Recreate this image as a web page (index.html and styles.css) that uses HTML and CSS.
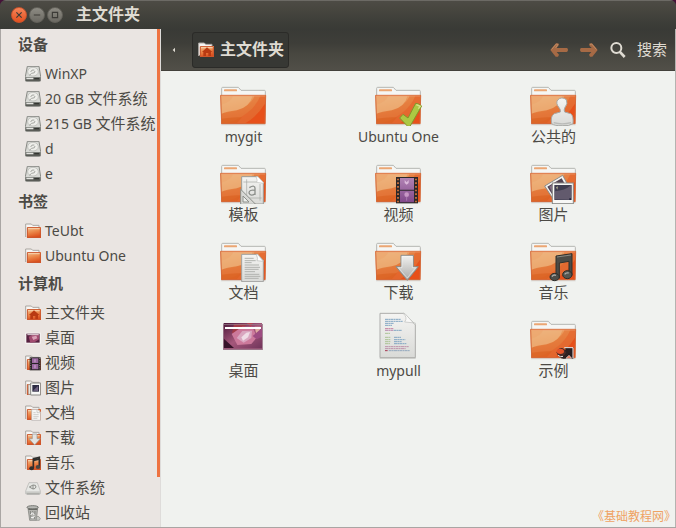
FILE: index.html
```html
<!DOCTYPE html>
<html lang="zh-CN">
<head>
<meta charset="utf-8">
<meta name="viewport" content="width=device-width, initial-scale=1">
<title>主文件夹</title>
<link rel="stylesheet" href="styles.css">
</head>
<body>
<svg class="defs" aria-hidden="true">
  <defs>
    <linearGradient id="g-front" x1="0" y1="0" x2="0.25" y2="1">
      <stop offset="0" stop-color="#eeb27c"/><stop offset="0.45" stop-color="#e88a48"/><stop offset="1" stop-color="#dc5820"/>
    </linearGradient>
    <linearGradient id="g-paper" x1="0" y1="0" x2="0" y2="1">
      <stop offset="0" stop-color="#f4f4f2"/><stop offset="1" stop-color="#d9dad7"/>
    </linearGradient>
    <linearGradient id="g-grey" x1="0" y1="0" x2="0" y2="1">
      <stop offset="0" stop-color="#f2f2f0"/><stop offset="1" stop-color="#a9a9a7"/>
    </linearGradient>
    <linearGradient id="g-film" x1="0" y1="0" x2="0" y2="1">
      <stop offset="0" stop-color="#b183b4"/><stop offset="1" stop-color="#81488a"/>
    </linearGradient>
    <linearGradient id="g-small" x1="0" y1="0" x2="0.3" y2="1">
      <stop offset="0" stop-color="#f0c294"/><stop offset="0.5" stop-color="#ec8a4c"/><stop offset="1" stop-color="#dc501c"/>
    </linearGradient>
    <linearGradient id="g-wall" x1="0" y1="0" x2="1" y2="1">
      <stop offset="0" stop-color="#4b1838"/><stop offset="0.5" stop-color="#a5577b"/><stop offset="1" stop-color="#6e3359"/>
    </linearGradient>
    <clipPath id="c-front"><rect x="3" y="52" width="132" height="84"/></clipPath>
    <clipPath id="c-wall"><rect x="11" y="33" width="115" height="76"/></clipPath>

    <symbol id="folder" viewBox="0 0 144 144">
      <path d="M3 139H137V142H3Z" fill="#000" opacity="0.12"/>
      <path d="M5 54V31Q5 28 8 28H55L63 37H133Q136 37 136 40V54Z" fill="#f5f6f4" stroke="#b5b6b2" stroke-width="3"/>
      <rect x="12" y="34" width="39" height="6" rx="2" fill="#eba673"/>
      <path d="M1 51H138L136 138H4Z" fill="url(#g-front)"/>
      <g clip-path="url(#c-front)">
        <path d="M3 138V108Q50 104 74 88Q100 70 104 52H136V138Z" fill="#e4783a" opacity="0.7"/>
        <path d="M3 52H98Q90 88 50 97Q20 101 3 108Z" fill="#eeb680" opacity="0.75"/>
        <path d="M3 52H40Q36 72 3 80Z" fill="#eca56c" opacity="0.6"/>
        <path d="M10 138Q50 130 80 106Q108 86 122 52H138V138Z" fill="#e4602a" opacity="0.6"/>
        <path d="M72 138Q110 118 136 76V138Z" fill="#e74e18" opacity="0.9"/>
        <path d="M4 122Q42 116 66 118L48 138H4Z" fill="#d9601f" opacity="0.6"/>
      </g>
      <path d="M2 52H137L135 137H5Z" fill="none" stroke="#d46a3c" stroke-width="3"/>
      <path d="M4 54H135" stroke="#f2a272" stroke-width="2"/>
    </symbol>

    <symbol id="small-folder" viewBox="0 0 48 48">
      <path d="M2 42V3H19L23 7H42V14" fill="#f7f5f3" stroke="#aaa5a0" stroke-width="3"/>
      <path d="M6 12H48V45H6Z" fill="url(#g-small)"/>
      <path d="M7 14H46V43H7Z" fill="none" stroke="#ca5730" stroke-width="3"/>
      <path d="M9 17H44" stroke="#f8d4ac" stroke-width="3"/>
    </symbol>

    <symbol id="drive" viewBox="0 0 48 48">
      <path d="M7 1H42L47 32V43Q47 46 44 46H4Q1 46 1 43V32Z" fill="#d8d9d5" stroke="#888a85" stroke-width="3"/>
      <path d="M2 34H46V45H2Z" fill="#5a5c57"/>
      <path d="M4 35H25V40H4Z" fill="#e5e5e1"/><path d="M28 36H42V40H28Z" fill="#343632"/>
      <ellipse cx="24" cy="17" rx="16" ry="13" fill="#eeeeea" stroke="#b2b4af" stroke-width="2"/>
      <path d="M17 18Q19 10 28 12M20 22Q31 22 30 15M13 28L20 22" fill="none" stroke="#a4a6a1" stroke-width="3"/>
    </symbol>
  </defs>
</svg>

<div class="window">
  <header class="titlebar">
    <div class="window-buttons">
      <button class="wbtn close" aria-label="关闭"><svg viewBox="0 0 48 48"><path d="M15 15L33 33M33 15L15 33"/></svg></button>
      <button class="wbtn" aria-label="最小化"><svg viewBox="0 0 48 48"><path d="M13 24H35"/></svg></button>
      <button class="wbtn" aria-label="最大化"><svg viewBox="0 0 48 48"><path d="M15 15H33V33H15Z"/></svg></button>
    </div>
    <h1>主文件夹</h1>
  </header>

  <div class="body">
    <nav class="sidebar" aria-label="位置">
      <h2>设备</h2>
      <ul>
        <li><a href="#"><svg><use href="#drive"/></svg><span class="latin">WinXP</span></a></li>
        <li><a href="#"><svg><use href="#drive"/></svg><span><span class="latin">20 GB </span>文件系统</span></a></li>
        <li><a href="#"><svg><use href="#drive"/></svg><span><span class="latin">215 GB </span>文件系统</span></a></li>
        <li><a href="#"><svg><use href="#drive"/></svg><span class="latin">d</span></a></li>
        <li><a href="#"><svg><use href="#drive"/></svg><span class="latin">e</span></a></li>
      </ul>
      <h2>书签</h2>
      <ul>
        <li><a href="#"><svg><use href="#small-folder"/></svg><span class="latin">TeUbt</span></a></li>
        <li><a href="#"><svg><use href="#small-folder"/></svg><span class="latin">Ubuntu One</span></a></li>
      </ul>
      <h2>计算机</h2>
      <ul>
        <li><a href="#"><svg viewBox="0 0 48 48"><use href="#small-folder"/><path d="M27 16L43 30H39V42H31V33H24V42H16V30H12Z" fill="#b93a12"/></svg>主文件夹</a></li>
        <li><a href="#"><svg viewBox="0 0 48 48"><path d="M1 8H47V41H1Z" fill="#faf8f7"/><path d="M4 11H44V38H4Z" fill="#56203f"/><path d="M16 38L11 20L26 13H42V28L30 36Z" fill="#a14b70"/><path d="M20 20L34 17L37 25L25 30Z" fill="#d9a0b6"/><path d="M7 14H41" stroke="#e9dce2" stroke-width="3"/></svg>桌面</a></li>
        <li><a href="#"><svg viewBox="0 0 48 48"><use href="#small-folder"/><path d="M14 7H47V46H14Z" fill="#282426"/><path d="M21 10H40V24H21ZM21 27H40V43H21Z" fill="#9a68a0"/><path d="M30 13V22M30 30V40" stroke="#c29bc4" stroke-width="4"/><path d="M17 9V45M44 9V45" stroke="#b9a5a5" stroke-width="2" stroke-dasharray="3 4"/></svg>视频</a></li>
        <li><a href="#"><svg viewBox="0 0 48 48"><use href="#small-folder"/><path d="M10 14H20V43H10Z" fill="#e8e5e0" stroke="#999691" stroke-width="2"/><path d="M17 9H47V45H17Z" fill="#f8f8f6" stroke="#888884" stroke-width="3"/><path d="M22 15H42V35H22Z" fill="#2c2b43"/><path d="M24 32L39 18V33Z" fill="#6f6281"/></svg>图片</a></li>
        <li><a href="#"><svg viewBox="0 0 48 48"><use href="#small-folder"/><path d="M20 13H38L47 22V46H20Z" fill="#f6f6f4" stroke="#b2aeaa" stroke-width="2"/><path d="M36 12V23H47M25 23H32M25 29H41M25 35H41M25 40H37" fill="none" stroke="#bbb9b5" stroke-width="2"/></svg>文档</a></li>
        <li><a href="#"><svg viewBox="0 0 48 48"><use href="#small-folder"/><path d="M22 12H36V26H46L29 45L12 26H22Z" fill="#e3e3e1" stroke="#969692" stroke-width="2"/></svg>下载</a></li>
        <li><a href="#"><svg viewBox="0 0 48 48"><use href="#small-folder"/><path d="M25 39V12L43 7V34" fill="none" stroke="#302f2d" stroke-width="5"/><path d="M25 16L43 12" stroke="#302f2d" stroke-width="6"/><ellipse cx="20" cy="40" rx="7" ry="6" fill="#30302e"/><ellipse cx="39" cy="36" rx="7" ry="6" fill="#474642"/></svg>音乐</a></li>
        <li><a href="#"><svg viewBox="0 0 48 48"><path d="M12 8H37L46 33V41H2V33Z" fill="#e6e7e4" stroke="#b0b1ae" stroke-width="2"/><path d="M2 34H46V42H2Z" fill="#c9cac6"/><path d="M5 42H44" stroke="#92938f" stroke-width="3"/><path d="M13 21L24 15V27ZM24 15Q34 14 33 21Q31 27 24 27" fill="none" stroke="#8b8d88" stroke-width="3"/></svg>文件系统</a></li>
        <li><a href="#"><svg viewBox="0 0 48 48"><path d="M9 10H38L34 46H14Z" fill="#b4b4b0" stroke="#777874" stroke-width="2"/><ellipse cx="23" cy="7" rx="17" ry="5" fill="#b7b8b4" stroke="#747571" stroke-width="3"/><path d="M10 13H37" stroke="#696a66" stroke-width="4"/><path d="M16 18L18 42M30 18L29 42M23 18V25" stroke="#858682" stroke-width="3"/><path d="M17 30L22 23L28 30M29 32L25 38H18" fill="none" stroke="#fff" stroke-width="3"/><path d="M34 38L39 33L46 40L43 46H34Z" fill="#c6c6c2" stroke="#8a8b87" stroke-width="2"/></svg>回收站</a></li>
      </ul>
    </nav>

    <main class="content">
      <div class="toolbar">
        <button class="scroll-left" aria-label="向左"><svg viewBox="0 0 12 18"><path d="M9 2V16L2 9Z" fill="#dfdbd2"/></svg></button>
        <button class="path"><svg viewBox="0 0 48 48"><use href="#small-folder"/><path d="M27 16L43 30H39V42H31V33H24V42H16V30H12Z" fill="#b93a12"/></svg>主文件夹</button>
        <div class="actions">
          <button aria-label="后退"><svg class="arrow" viewBox="0 0 54 48"><path d="M1 24L18 4L27 5L25 12L19 18H51Q54 19 54 24Q54 29 50 30H20L27 38L24 44H17Z" fill="#a66a45"/><path d="M5 22L19 6L24 7L17 18" fill="none" stroke="#c08b64" stroke-width="3"/></svg></button>
          <button aria-label="前进"><svg class="arrow" viewBox="0 0 54 48"><path d="M53 24L36 4L27 5L29 12L35 18H3Q0 19 0 24Q0 29 4 30H34L27 38L30 44H37Z" fill="#a66a45"/><path d="M30 7L35 6L49 22" fill="none" stroke="#c08b64" stroke-width="3"/></svg></button>
          <button class="search"><svg viewBox="0 0 48 48"><circle cx="19" cy="18" r="15" fill="none" stroke="#dfdbd2" stroke-width="6"/><path d="M29 29L44 45" stroke="#dfdbd2" stroke-width="8"/></svg>搜索</button>
        </div>
      </div>

      <ul class="files">
        <li><a href="#"><svg><use href="#folder"/></svg><span class="latin">mygit</span></a></li>
        <li><a href="#"><svg viewBox="0 0 144 144"><use href="#folder"/><path d="M74 120L84 109L99 120L122 76L131 78L140 84L105 145H98Z" fill="#acc843" stroke="#83952b" stroke-width="3" stroke-linejoin="round"/><path d="M124 80L136 85L130 92" fill="none" stroke="#d8e28c" stroke-width="4"/></svg><span class="latin">Ubuntu One</span></a></li>
        <li><a href="#"><svg viewBox="0 0 144 144"><use href="#folder"/><path d="M65 137Q61 113 73 107L91 102Q92 94 88 90Q76 76 83 66Q95 54 109 65Q115 76 104 90Q101 96 104 102L122 107Q131 113 129 137Q117 145 97 143Q74 144 65 137Z" fill="url(#g-paper)" stroke="#a8aaa6" stroke-width="3"/><path d="M71 134Q97 141 123 134" fill="none" stroke="#babbb8" stroke-width="4"/></svg>公共的</a></li>

        <li><a href="#"><svg viewBox="0 0 144 144"><use href="#folder"/><path d="M65 62H112L130 80V144H65Z" fill="url(#g-paper)" stroke="#9b9d99" stroke-width="3"/><path d="M108 62Q114 74 110 79L130 82V79L114 62Z" fill="#fff" stroke="#c0c1be" stroke-width="2"/><path d="M80 70V135M120 84V134M70 78H110M72 126H125" stroke="#a4a6a2" stroke-width="2"/><path d="M88 95Q103 85 105 96V117M105 103Q87 100 87 111Q92 123 105 113" fill="none" stroke="#8d908c" stroke-width="4"/><path d="M62 100V145H107Z" fill="#d7d8d5" stroke="#8b8e89" stroke-width="3"/><path d="M69 120V138H87Z" fill="#eceeeb" stroke="#8b8e89" stroke-width="3"/></svg>模板</a></li>
        <li><a href="#"><svg viewBox="0 0 144 144"><use href="#folder"/><rect x="63" y="63" width="66" height="79" fill="#2c2829"/><path d="M75 66H117V101H75ZM75 104H117V139H75Z" fill="url(#g-film)"/><path d="M69 68V140M123 68V140" stroke="#d8773d" stroke-width="5" stroke-dasharray="5 6"/><path d="M89 72L95 79L101 72V81L95 86L89 81Z" fill="#dcb9db"/><circle cx="95" cy="116" r="7" fill="#c797c5"/><path d="M95 122V134" stroke="#a97ab0" stroke-width="3"/></svg>视频</a></li>
        <li><a href="#"><svg viewBox="0 0 144 144"><use href="#folder"/><path d="M44 90L98 58L125 108L76 139Z" fill="#f4f4f2" stroke="#8c8c89" stroke-width="3"/><path d="M52 92L95 67L108 90L72 124Z" fill="#514453"/><path d="M58 92L80 78L91 87L67 111Z" fill="#806a83"/><rect x="67" y="81" width="63" height="62" fill="#f7f7f5" stroke="#898a87" stroke-width="3"/><rect x="73" y="87" width="52" height="45" fill="#3f3d50"/><path d="M75 130V106Q104 104 123 88V131Z" fill="#625a6d"/><path d="M78 94L84 91L82 101Z" fill="#aaa88b"/><path d="M118 127H123V132H118Z" fill="#202138"/></svg>图片</a></li>

        <li><a href="#"><svg viewBox="0 0 144 144"><use href="#folder"/><path d="M65 61H113L130 79V143H65Z" fill="url(#g-paper)" stroke="#a0a19e" stroke-width="3"/><path d="M109 61Q115 75 111 80L130 82L113 61Z" fill="#fff" stroke="#b7b8b5" stroke-width="2"/><path d="M74 73H101M74 80H107M74 86H95M74 93H117M74 100H120M74 106H116M74 113H105M74 121H118M74 127H121M74 133H116" stroke="#b1b3af" stroke-width="3"/></svg>文档</a></li>
        <li><a href="#"><svg viewBox="0 0 144 144"><use href="#folder"/><path d="M78 64H115V98H130L97 139L63 98H78Z" fill="url(#g-grey)" stroke="#8a8b87" stroke-width="3"/><path d="M81 67H112V101H122L97 132L70 101H81Z" fill="none" stroke="#fff" stroke-width="2" opacity="0.6"/></svg>下载</a></li>
        <li><a href="#"><svg viewBox="0 0 144 144"><use href="#folder"/><path d="M78 66L126 59V124H117V82L88 87V132H78Z" fill="#4b4b46" stroke="#2e302d" stroke-width="3"/><path d="M81 69L123 63" stroke="#888982" stroke-width="3"/><ellipse cx="74" cy="129" rx="14" ry="11" fill="#4b4c48" stroke="#2b2d29" stroke-width="3"/><ellipse cx="112" cy="122" rx="14" ry="12" fill="#555650" stroke="#2b2d29" stroke-width="3"/><path d="M66 128Q70 121 78 124M104 121Q108 115 116 117" fill="none" stroke="#aaaba6" stroke-width="4"/></svg>音乐</a></li>

        <li><a href="#"><svg viewBox="0 0 144 144"><rect x="9" y="36" width="119" height="78" fill="#9c5b7a"/><g clip-path="url(#c-wall)"><rect x="9" y="33" width="119" height="78" fill="url(#g-wall)"/><path d="M42 36H80L64 60L36 64Z" fill="#a13b47"/><path d="M35 66L66 44H97L111 76L94 96L52 99Z" fill="#cc799b"/><path d="M50 78L67 57L96 56L94 78L71 92Z" fill="#d9a6c0"/><path d="M64 76L79 62L90 60L84 76L69 86Z" fill="#efdce6"/><path d="M104 44H120V62L109 68Z" fill="#dfaaa1"/><path d="M80 33H99L92 45Z" fill="#b64552"/><path d="M98 72L126 48V74L110 82Z" fill="#9d4c81"/><path d="M9 78L42 108H9Z" fill="#361228"/></g><path d="M15 48H123" stroke="#fff" stroke-width="6"/><rect x="10" y="37" width="117" height="76" fill="none" stroke="#9b8291" stroke-width="2"/></svg>桌面</a></li>
        <li><a href="#"><svg viewBox="0 0 144 144"><path d="M15 4H86L121 38V137H15Z" fill="url(#g-paper)" stroke="#acadaa" stroke-width="3"/><path d="M14 139H122" stroke="#b9bab7" stroke-width="2"/><path d="M84 4Q99 16 89 30L121 33V39L90 5Z" fill="#f8f8f7" stroke="#bbbdb9" stroke-width="2"/><g stroke-width="3" stroke-dasharray="9 1 5 1"><path d="M30 22H78M30 28H83M30 34H57M30 40H51" stroke="#83a7c3"/><path d="M30 50H56" stroke="#c580a1"/><path d="M30 55H55" stroke="#b98baf"/><path d="M56 55H80" stroke="#83a7c3"/><path d="M30 64H45M30 76H47M30 83H47M30 89H47M30 95H45" stroke="#abc395"/><path d="M57 76H78M57 83H91M57 89H80M57 95H94" stroke="#83a7c3"/><path d="M30 104H101M30 110H92" stroke="#bd91aa"/><path d="M30 116H38" stroke="#a4354f"/><path d="M41 116H105" stroke="#92a8bd"/></g></svg><span class="latin">mypull</span></a></li>
        <li><a href="#"><svg viewBox="0 0 144 144"><use href="#folder"/><path d="M105 106H130V140H96L112 128Z" fill="#231b1e"/><path d="M103 107H129V139" fill="none" stroke="#f4efec" stroke-width="3"/><path d="M80 121Q84 107 97 108Q108 113 110 124Q106 139 95 139Q82 133 80 121Z" fill="#4a2c29"/><ellipse cx="91" cy="118" rx="11" ry="8" fill="#e45329"/><path d="M84 130Q97 140 108 122L104 113L122 111L121 129L116 124Q107 140 94 139" fill="#2c2021"/><path d="M84 130Q92 137 99 133" fill="none" stroke="#eeeae7" stroke-width="3"/><path d="M108 139L117 130L125 139Z" fill="#e5694b" stroke="#f4efec" stroke-width="2"/></svg>示例</a></li>
      </ul>
    </main>
  </div>
  <p class="credit">《基础教程网》</p>
</div>
</body>
</html>
```

FILE: styles.css
```css
* { box-sizing: border-box; }

html { background: #451238; }

body {
  margin: 0;
  font: 15px/20px "Liberation Sans", "Noto Sans CJK SC", sans-serif;
  color: #4c4a45;
}

h1, h2, ul, p { margin: 0; padding: 0; }
ul { list-style: none; }
a { color: inherit; text-decoration: none; }
svg { display: block; flex: none; }
.defs { position: absolute; width: 0; height: 0; }

button {
  display: flex;
  align-items: center;
  margin: 0;
  padding: 0;
  border: 0;
  background: none;
  color: inherit;
  font: inherit;
}

.latin { font-family: "Noto Sans", sans-serif; font-size: 14px; }

.window {
  position: relative;
  display: flex;
  flex-direction: column;
  min-height: 100vh;
  border-radius: 6px 6px 0 0;
  border-bottom: 1px solid #a9a5a3;
  background: #3c3d38;
  overflow: hidden;
}

.titlebar {
  display: flex;
  align-items: center;
  gap: 13px;
  height: 29px;
  padding: 0 11px;
  border-top: 1px solid #6c6a65;
  background: linear-gradient(#4d4b45, #47463f 30%, #3c3d38 80%, #393a36);
  color: #dfdbd2;
}

.titlebar h1 { font-size: 16px; line-height: 26px; }
.window-buttons { display: flex; gap: 2px; }

.wbtn {
  width: 16px;
  height: 16px;
  border: 1px solid #63615a;
  border-radius: 50%;
  background: linear-gradient(#8d8b83, #6b6962);
}
.wbtn.close { border-color: #c9532c; background: linear-gradient(#f58458, #e3501f); }
.wbtn svg { width: 14px; height: 14px; fill: none; stroke: #3c3b37; stroke-width: 4; }

.body { display: flex; flex: 1; }

.sidebar {
  position: relative;
  flex: none;
  width: 161px;
  border-left: 1px solid #aaa6a4;
  border-right: 1px solid #dedcda;
  background: #eae5e2;
}
.sidebar::after {
  content: "";
  position: absolute;
  top: 0;
  right: 0;
  width: 3px;
  height: 90%;
  background: #ee7341;
}
.sidebar h2 { padding-left: 17px; font-size: 15px; line-height: 32px; }
.sidebar a { display: flex; align-items: center; gap: 4px; height: 25px; padding-left: 24px; white-space: nowrap; }
.sidebar svg { width: 16px; height: 16px; }

.content {
  flex: 1;
  min-width: 0;
  border-right: 1px solid #b5b3b0;
  background: #f0f2ef;
}

.toolbar {
  display: flex;
  align-items: center;
  height: 42px;
  padding: 0 8px 0 10px;
  border-bottom: 1px solid #42413b;
  background: linear-gradient(#393a36, #3e3e39 35%, #484740 60%, #514f48);
  color: #dfdbd2;
}
.scroll-left svg { width: 6px; height: 6px; }

.path {
  gap: 6px;
  height: 36px;
  margin-left: 15px;
  padding: 0 4px 0 5px;
  border: 1px solid #2b2b28;
  border-radius: 3px;
  background: #373834;
  font-size: 16px;
  font-weight: bold;
}
.path svg { width: 16px; height: 16px; }

.actions { display: flex; align-items: center; gap: 12px; margin-left: auto; }
.arrow { width: 18px; height: 16px; }
.search { gap: 11px; }
.search svg { width: 16px; height: 16px; }

.files {
  display: grid;
  grid-template-columns: repeat(auto-fill, 155px);
  row-gap: 8px;
  padding: 7px 0 0 5px;
}
.files a { display: flex; flex-direction: column; align-items: center; line-height: 22px; }
.files svg { width: 48px; height: 48px; }

.credit {
  position: absolute;
  right: 0;
  bottom: 0;
  color: #efa263;
  font-size: 12px;
}
```
